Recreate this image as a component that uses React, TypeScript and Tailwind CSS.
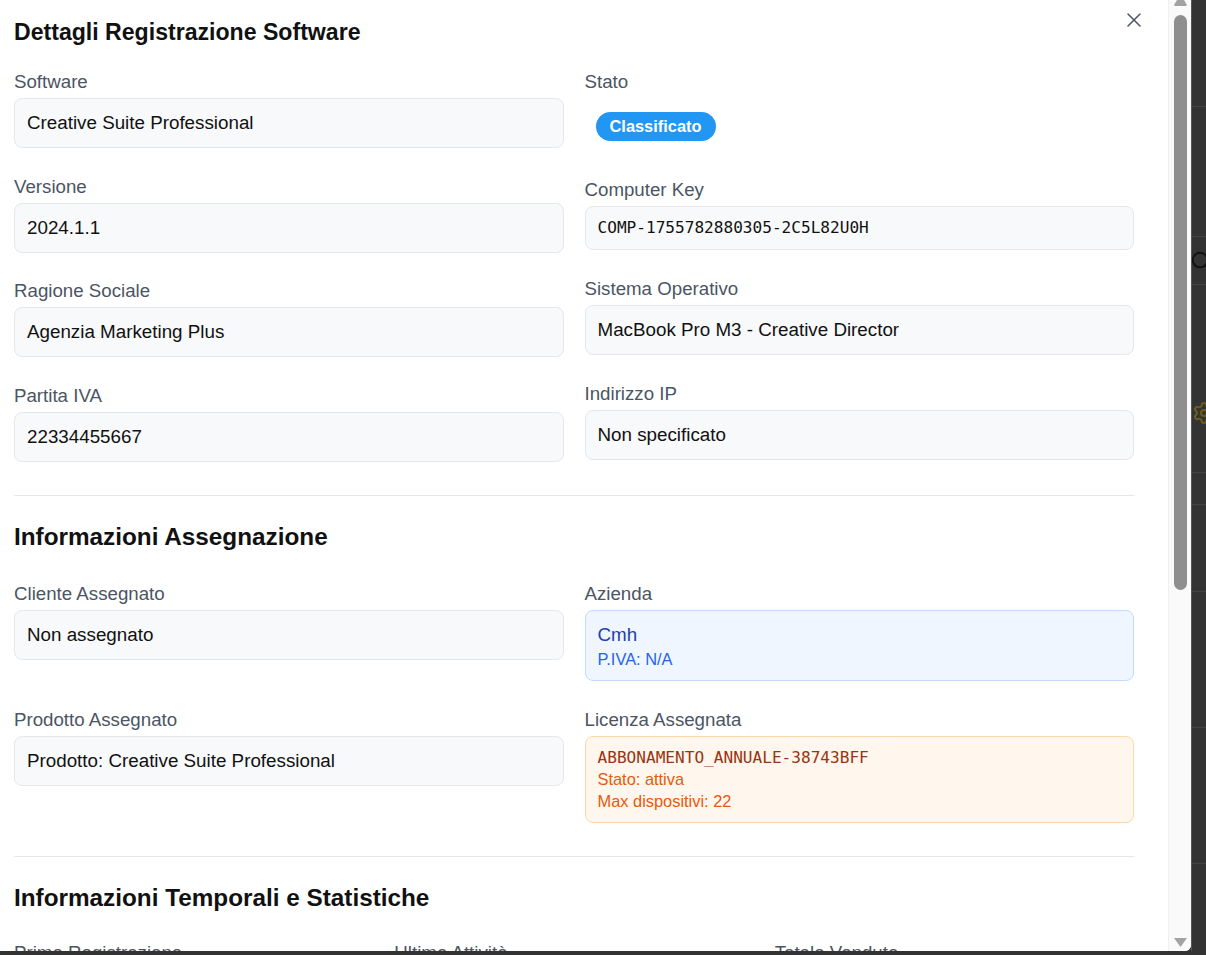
import React from "react";
import { X, Search, Settings } from "lucide-react";

function Field({ label, children }: { label: string; children: React.ReactNode }) {
  return (
    <div>
      <div className="mb-[2px] text-[18.7px] leading-[28px] text-[#4b5563]">{label}</div>
      {children}
    </div>
  );
}

function ValueBox({ children }: { children: React.ReactNode }) {
  return (
    <div className="rounded-[8px] border border-[#e5e7eb] bg-[#f8f9fa] px-[12px] py-[10px] text-[18.8px] leading-[28px] text-[#111]">
      {children}
    </div>
  );
}

function MonoBox({ children }: { children: React.ReactNode }) {
  return (
    <div className="rounded-[8px] border border-[#e5e7eb] bg-[#f8f9fa] px-[12px] py-[10px] font-['DejaVu_Sans_Mono',monospace] text-[16.1px] leading-[22px] text-[#111]">
      {children}
    </div>
  );
}

function SectionTitle({ children }: { children: React.ReactNode }) {
  return <h3 className="mb-[27px] text-[24.3px] font-bold leading-[32px] text-[#111]">{children}</h3>;
}

export default function App() {
  return (
    <div className="flex h-[955px] w-[1206px] flex-col overflow-hidden bg-[#333] font-['Liberation_Sans',Arial,sans-serif]">
      <div className="flex h-[951px]">
        {/* Modal */}
        <div className="relative flex h-full w-[1191px] overflow-hidden rounded-br-[6px] bg-white">
          <div className="flex-1 pl-[14px]">
            <div className="w-[1120px] pt-[16px]">
              <h2 className="mb-[20px] text-[23.1px] font-bold leading-[32px] text-[#111]">
                Dettagli Registrazione Software
              </h2>

              {/* Section 1 */}
              <div className="flex gap-[21px] border-b border-[#e5e7eb] pb-[33px]">
                <div className="flex flex-1 flex-col gap-[24.7px]">
                  <Field label="Software">
                    <ValueBox>Creative Suite Professional</ValueBox>
                  </Field>
                  <Field label="Versione">
                    <ValueBox>2024.1.1</ValueBox>
                  </Field>
                  <Field label="Ragione Sociale">
                    <ValueBox>Agenzia Marketing Plus</ValueBox>
                  </Field>
                  <Field label="Partita IVA">
                    <ValueBox>22334455667</ValueBox>
                  </Field>
                </div>
                <div className="flex flex-1 flex-col gap-[25px]">
                  <Field label="Stato">
                    <div className="px-[11px] pb-[10px] pt-[14px]">
                      <span className="inline-flex h-[29px] items-center rounded-full bg-[#2196f3] px-[14px] text-[16.4px] font-bold text-white">
                        Classificato
                      </span>
                    </div>
                  </Field>
                  <Field label="Computer Key">
                    <MonoBox>COMP-1755782880305-2C5L82U0H</MonoBox>
                  </Field>
                  <Field label="Sistema Operativo">
                    <ValueBox>MacBook Pro M3 - Creative Director</ValueBox>
                  </Field>
                  <Field label="Indirizzo IP">
                    <ValueBox>Non specificato</ValueBox>
                  </Field>
                </div>
              </div>

              {/* Section 2 */}
              <div className="border-b border-[#e5e7eb] pb-[33px] pt-[25px]">
                <SectionTitle>Informazioni Assegnazione</SectionTitle>
                <div className="grid grid-cols-2 gap-x-[21px] gap-y-[25px]">
                  <Field label="Cliente Assegnato">
                    <ValueBox>Non assegnato</ValueBox>
                  </Field>
                  <Field label="Azienda">
                    <div className="rounded-[8px] border border-[#bfdbfe] bg-[#eff6ff] px-[12px] py-[10px]">
                      <div className="text-[18.8px] leading-[28px] text-[#1e40af]">Cmh</div>
                      <div className="text-[16.4px] leading-[21px] text-[#2563eb]">P.IVA: N/A</div>
                    </div>
                  </Field>
                  <Field label="Prodotto Assegnato">
                    <ValueBox>Prodotto: Creative Suite Professional</ValueBox>
                  </Field>
                  <Field label="Licenza Assegnata">
                    <div className="rounded-[8px] border border-[#fed7aa] bg-[#fff7ed] px-[12px] py-[10px]">
                      <div className="font-['DejaVu_Sans_Mono',monospace] text-[16.1px] leading-[22px] text-[#9a3412]">
                        ABBONAMENTO_ANNUALE-38743BFF
                      </div>
                      <div className="text-[16.4px] leading-[21.5px] text-[#ea580c]">Stato: attiva</div>
                      <div className="text-[16.4px] leading-[21.5px] text-[#ea580c]">Max dispositivi: 22</div>
                    </div>
                  </Field>
                </div>
              </div>

              {/* Section 3 */}
              <div className="pt-[25px]">
                <SectionTitle>Informazioni Temporali e Statistiche</SectionTitle>
                <div className="-mt-[2px] grid grid-cols-3 gap-[21px]">
                  <Field label="Prima Registrazione">
                    <ValueBox>21/08/2025, 15:28</ValueBox>
                  </Field>
                  <Field label="Ultima Attività">
                    <ValueBox>21/08/2025, 15:28</ValueBox>
                  </Field>
                  <Field label="Totale Vendute">
                    <ValueBox>0</ValueBox>
                  </Field>
                </div>
              </div>
            </div>
          </div>

          {/* Scrollbar */}
          <div className="flex w-[23px] flex-col items-center border-l border-[#f0f0f0] bg-[#fafafa]">
            <svg width="13" height="6" viewBox="0 0 13 6" className="shrink-0">
              <polygon points="3,0 10,0 13,5 12,6 1,6 0,5" fill="#a3a3a3" />
            </svg>
            <div className="mt-[9px] h-[575px] w-[13px] shrink-0 rounded-full bg-[#8f8f8f]" />
            <div className="flex-1" />
            <svg width="13" height="9" viewBox="0 0 13 9" className="mb-[4px] shrink-0">
              <polygon points="0,0 13,0 6.5,9" fill="#a3a3a3" />
            </svg>
          </div>

          <button className="absolute right-[45px] top-[8px] text-[#4b5563]">
            <X size={24} strokeWidth={1.5} />
          </button>
        </div>

        {/* Backdrop strip */}
        <div className="flex flex-1 flex-col overflow-hidden border-l border-[#555] bg-[#333]">
          <div className="h-[107px] shrink-0 border-b border-[#444]" />
          <div className="h-[130px] shrink-0 border-b border-[#444]" />
          <div className="flex h-[48px] shrink-0 items-center border-b border-[#444]">
            <Search size={22} strokeWidth={2} className="-ml-[2px] shrink-0 text-[#111]" />
          </div>
          <div className="h-[188px] shrink-0 border-b border-[#444] pt-[116px]">
            <Settings size={24} strokeWidth={2} className="shrink-0 text-[#6e5b1e]" />
          </div>
          <div className="h-[32px] shrink-0 border-b border-[#444]" />
          <div className="h-[87px] shrink-0 border-b border-[#444]" />
          <div className="h-[136px] shrink-0 border-b border-[#444]" />
          <div className="h-[136px] shrink-0 border-b border-[#444]" />
        </div>
      </div>
    </div>
  );
}
